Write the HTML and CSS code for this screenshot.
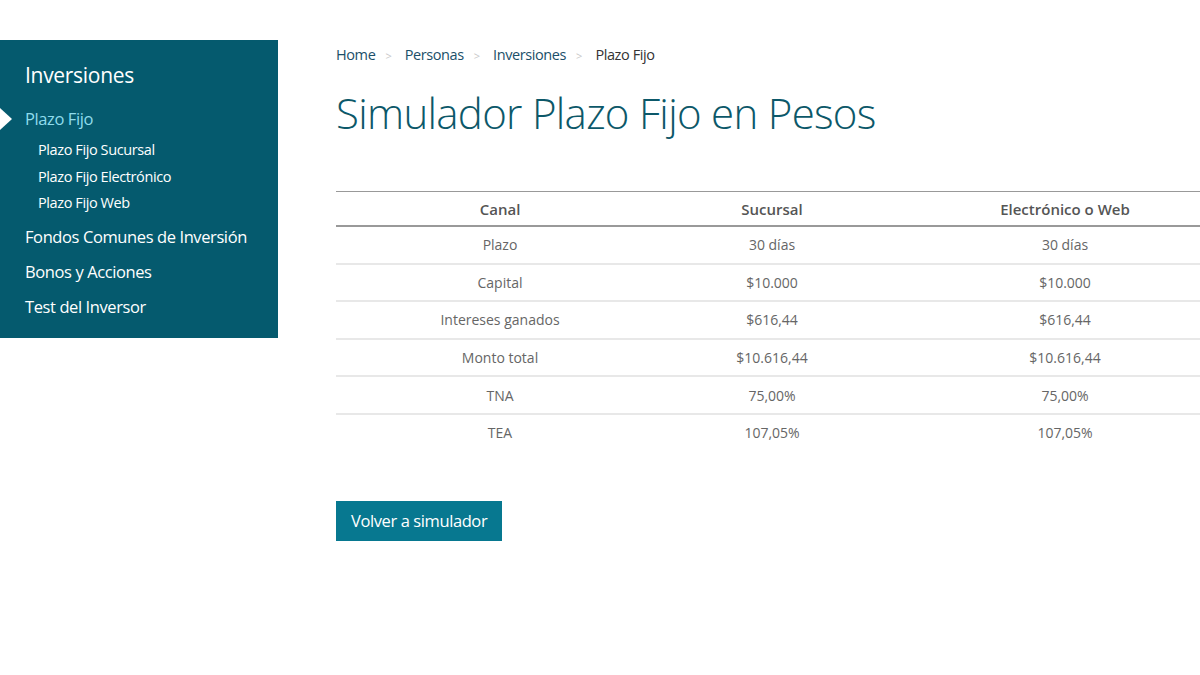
FILE: index.html
```html
<!DOCTYPE html>
<html lang="es">
<head>
<meta charset="utf-8">
<title>Simulador Plazo Fijo en Pesos</title>
<link rel="stylesheet" href="styles.css">
</head>
<body>
<div class="page">
  <aside class="sidebar">
    <h2 class="side-title">Inversiones</h2>
    <ul class="side-menu">
      <li class="side-item active"><a href="#">Plazo Fijo</a>
        <ul class="side-sub">
          <li><a href="#">Plazo Fijo Sucursal</a></li>
          <li><a href="#">Plazo Fijo Electrónico</a></li>
          <li><a href="#">Plazo Fijo Web</a></li>
        </ul>
      </li>
      <li class="side-item"><a href="#">Fondos Comunes de Inversión</a></li>
      <li class="side-item"><a href="#">Bonos y Acciones</a></li>
      <li class="side-item"><a href="#">Test del Inversor</a></li>
    </ul>
  </aside>
  <main class="content">
    <nav class="breadcrumb">
      <a href="#">Home</a><span class="sep">&gt;</span>
      <a href="#">Personas</a><span class="sep">&gt;</span>
      <a href="#">Inversiones</a><span class="sep">&gt;</span>
      <span class="current">Plazo Fijo</span>
    </nav>
    <h1 class="title">Simulador Plazo Fijo en Pesos</h1>
    <table class="results">
      <thead>
        <tr><th class="c1">Canal</th><th class="c2">Sucursal</th><th class="c3">Electrónico o Web</th></tr>
      </thead>
      <tbody>
        <tr><td>Plazo</td><td>30 días</td><td>30 días</td></tr>
        <tr><td>Capital</td><td>$10.000</td><td>$10.000</td></tr>
        <tr><td>Intereses ganados</td><td>$616,44</td><td>$616,44</td></tr>
        <tr><td>Monto total</td><td>$10.616,44</td><td>$10.616,44</td></tr>
        <tr><td>TNA</td><td>75,00%</td><td>75,00%</td></tr>
        <tr><td>TEA</td><td>107,05%</td><td>107,05%</td></tr>
      </tbody>
    </table>
    <a class="btn" href="#">Volver a simulador</a>
  </main>
</div>
</body>
</html>
```

FILE: styles.css
```css
html, body {
  margin: 0;
  padding: 0;
  background: #fff;
  overflow: hidden;
}
body {
  font-family: "Open Sans", "Noto Sans", "Liberation Sans", sans-serif;
  color: #666;
}
a { text-decoration: none; }
ul { list-style: none; margin: 0; padding: 0; }

.page {
  display: flex;
  align-items: flex-start;
  width: 1260px;
}

.sidebar {
  flex: 0 0 278px;
  margin-top: 40px;
  height: 298px;
  box-sizing: border-box;
  background: #055a6e;
  padding: 20px 0 0 25px;
}
.side-title {
  margin: 0 0 17px;
  font-size: 21px;
  font-weight: 400;
  color: #fff;
  line-height: 30px;
  letter-spacing: -0.3px;
}
.side-item > a {
  display: block;
  color: #fff;
  font-size: 16.5px;
  line-height: 35px;
  letter-spacing: -0.4px;
}
.side-item.active > a {
  color: #8fdcec;
  position: relative;
  line-height: 24px;
}
.side-item.active > a::before {
  content: "";
  position: absolute;
  left: -25px;
  top: 1px;
  border-left: 12px solid #fff;
  border-top: 11px solid transparent;
  border-bottom: 11px solid transparent;
}
.side-sub {
  padding: 6px 0 2px 13px;
}
.side-sub a {
  display: block;
  color: #fff;
  font-size: 14.5px;
  line-height: 26.5px;
  letter-spacing: -0.4px;
}

.content {
  margin-left: 58px;
  flex: 1;
}
.breadcrumb {
  margin-top: 44px;
  font-size: 14.5px;
  line-height: 22px;
  letter-spacing: -0.4px;
}
.breadcrumb a { color: #1b4f69; }
.breadcrumb .sep {
  color: #c8c8c8;
  font-size: 11px;
  margin: 0 10px;
}
.breadcrumb .current { color: #333; }

.title {
  margin: 14px 0 0;
  font-size: 42px;
  font-weight: 300;
  color: #0c5869;
  line-height: 64px;
  letter-spacing: -0.7px;
}

.results {
  margin-top: 46px;
  width: 914px;
  border-collapse: collapse;
  font-size: 14px;
  color: #666;
}
.results th {
  font-size: 15px;
  font-weight: 600;
  color: #555;
  height: 33px;
  border-top: 1px solid #999;
  border-bottom: 2px solid #999;
  padding: 0;
}
.results .c1 { width: 328px; }
.results .c2 { width: 216px; }
.results td {
  text-align: center;
  height: 35.6px;
  padding: 0;
  border-bottom: 2px solid #e8e8e8;
}
.results tbody tr:last-child td { border-bottom: none; }

.btn {
  display: inline-block;
  margin-top: 50px;
  background: #077890;
  color: #fff;
  font-size: 16.5px;
  line-height: 40px;
  padding: 0 15px;
  letter-spacing: -0.4px;
}
```
